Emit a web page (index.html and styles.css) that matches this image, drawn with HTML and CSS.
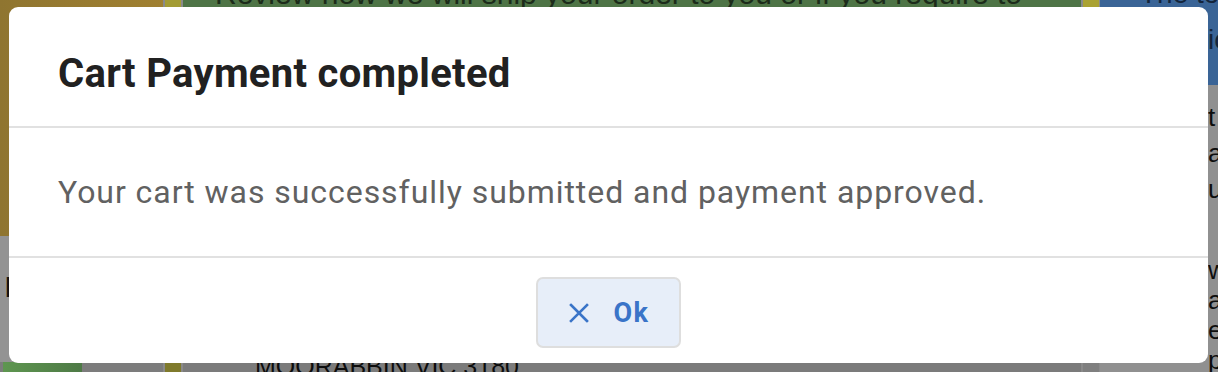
FILE: index.html
```html
<!DOCTYPE html>
<html>
<head>
<meta charset="utf-8">
<link rel="stylesheet" href="styles.css">
</head>
<body>
<div class="page">
  <div class="col col-a">
    <div class="blk gold"></div>
    <div class="blk gray-a"><span class="frag big">I</span></div>
    <div class="blk bottom-a"><div class="greenbit"></div></div>
  </div>
  <div class="sep"></div>
  <div class="col col-b">
    <div class="blk olive-top"></div>
    <div class="blk gray-b"></div>
    <div class="blk olive-bot"></div>
  </div>
  <div class="sep"></div>
  <div class="col col-c">
    <div class="blk green"><p class="bgtext">Review how we will ship your order to you or if you require to</p></div>
    <div class="blk gray-c"><p class="addr">MOORABBIN VIC 3180</p></div>
  </div>
  <div class="sep"></div>
  <div class="col col-d">
    <div class="blk yellow"></div>
    <div class="blk gray-d"></div>
  </div>
  <div class="sep1"></div>
  <div class="col col-e">
    <div class="blk blue">
      <p class="bluetext">The total</p>
      <p class="bluetext line2">icludes</p>
    </div>
    <div class="blk gray-e">
      <p class="sidetext s1">t<br>ar<br>u</p>
      <p class="sidetext s2">w<br>a<br>e<br>purchase</p>
    </div>
  </div>
</div>

<div class="modal" role="dialog">
  <div class="modal-header">
    <h2 class="modal-title">Cart Payment completed</h2>
  </div>
  <div class="modal-body">
    <p class="modal-text">Your cart was successfully submitted and payment approved.</p>
  </div>
  <div class="modal-footer">
    <button class="btn-ok" type="button">
      <svg class="btn-icon" width="20" height="20" viewBox="0 0 20 20" aria-hidden="true">
        <path d="M2 2 L18 18 M18 2 L2 18" stroke="currentColor" stroke-width="2.6" stroke-linecap="square" fill="none"/>
      </svg>
      <span>Ok</span>
    </button>
  </div>
</div>
</body>
</html>
```

FILE: styles.css
```css
html, body {
  margin: 0;
  padding: 0;
  width: 1218px;
  height: 372px;
  overflow: hidden;
  background: #7d7d7d;
  font-family: Roboto, "Liberation Sans", sans-serif;
}

.page {
  display: flex;
  width: 1218px;
  height: 372px;
}

.col {
  display: flex;
  flex-direction: column;
}

.col-a { width: 163px; }
.col-b { width: 16px; }
.col-c { width: 898px; }
.col-d { width: 16px; }
.col-e { width: 118px; }

.sep { width: 2px; background: #8a8a8a; }
.sep1 { width: 1px; background: #8a8a8a; }

.blk { overflow: hidden; }

.gold {
  height: 236px;
  background: linear-gradient(90deg, #8f7530 0%, #a08030 100%);
}
.gray-a {
  height: 126px;
  background: #939393;
}
.frag.big {
  display: block;
  margin: 34px 0 0 4px;
  font-family: "Liberation Sans", sans-serif;
  font-size: 30px;
  color: #111;
}
.bottom-a {
  flex: 1;
  background: #7c7c7c;
  padding-left: 3px;
}
.greenbit {
  width: 79px;
  height: 100%;
  background: linear-gradient(90deg, #5e9650 0%, #4e7a46 100%);
}

.olive-top { height: 236px; background: #a39c34; }
.gray-b { height: 126px; background: #858585; }
.olive-bot { flex: 1; background: #7f7a2c; }

.green {
  height: 236px;
  background: #4e7446;
}
.bgtext {
  margin: -24px 0 0 32px;
  font-family: "Liberation Sans", sans-serif;
  font-size: 30px;
  line-height: 36px;
  color: #1c2b1a;
  white-space: nowrap;
}
.gray-c {
  flex: 1;
  background: #7b7b7b;
}
.addr {
  margin: 115px 0 0 72px;
  font-family: "Liberation Sans", sans-serif;
  font-size: 25px;
  line-height: 30px;
  color: #0d0d0d;
  white-space: nowrap;
}

.yellow { height: 236px; background: #aaa232; }
.gray-d { flex: 1; background: #7f7f7f; }

.blue {
  height: 85px;
  background: #3a6496;
}
.bluetext {
  margin: -24px 0 0 40px;
  font-family: "Liberation Sans", sans-serif;
  font-size: 28px;
  line-height: 36px;
  color: #14243a;
  white-space: nowrap;
}
.bluetext.line2 {
  margin: 10px 0 0 108px;
}
.gray-e {
  flex: 1;
  background: #909090;
}
.sidetext {
  margin: 0 0 0 108px;
  font-family: "Liberation Sans", sans-serif;
  font-size: 26px;
  color: #0d0d0d;
  white-space: nowrap;
}
.s1 { margin-top: 14px; line-height: 36px; }
.s2 { margin-top: 48px; line-height: 30px; }

/* Modal */
.modal {
  position: absolute;
  left: 9px;
  top: 7px;
  width: 1199px;
  height: 356px;
  background: #fff;
  border-radius: 9px;
  display: flex;
  flex-direction: column;
  overflow: hidden;
}

.modal-header {
  flex: none;
  height: 121px;
  box-sizing: border-box;
  padding: 43px 49px 0;
  border-bottom: 2px solid #e1e1e1;
}

.modal-title {
  margin: 0;
  font-size: 40px;
  line-height: 48px;
  font-weight: 700;
  color: #212121;
  letter-spacing: 0.3px;
}

.modal-body {
  flex: none;
  height: 130px;
  box-sizing: border-box;
  padding: 45px 49px 0;
  border-bottom: 2px solid #e1e1e1;
}

.modal-text {
  margin: 0;
  font-size: 32px;
  line-height: 38px;
  color: #616161;
  letter-spacing: 0.95px;
}

.modal-footer {
  flex: 1;
  display: flex;
  justify-content: center;
  align-items: flex-start;
  padding-top: 19px;
}

.btn-ok {
  width: 145px;
  height: 71px;
  box-sizing: border-box;
  background: #e7eef9;
  border: 2px solid #dedede;
  border-radius: 7px;
  color: #3a74c8;
  display: flex;
  align-items: center;
  justify-content: center;
  gap: 24px;
  font-family: Roboto, "Liberation Sans", sans-serif;
  font-size: 27px;
  font-weight: 700;
  letter-spacing: 1.5px;
  padding: 0 0 0 2px;
}
.btn-icon { flex: none; }
```
